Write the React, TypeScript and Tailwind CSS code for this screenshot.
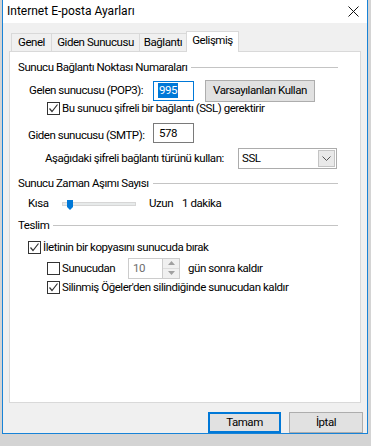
import React from 'react';

const Check = ({ checked }: { checked?: boolean }) => (
  <div className="w-[13px] h-[13px] border border-[#333333] bg-white flex items-center justify-center shrink-0">
    {checked && (
      <svg width="11" height="11" viewBox="0 0 11 11" fill="none">
        <path d="M1.5 5.5L4 8.5L9.5 1.5" stroke="#333333" strokeWidth="1.2" />
      </svg>
    )}
  </div>
);

const GroupHead = ({ title }: { title: string }) => (
  <div className="h-[16px] flex items-center pl-[8px] pr-[22px]">
    <span>{title}</span>
    <div className="flex-1 h-px bg-[#c4c4c4] ml-[4px]"></div>
  </div>
);

const tabs = [
  { label: 'Genel', w: 'w-[41px]' },
  { label: 'Giden Sunucusu', w: 'w-[89px]' },
  { label: 'Bağlantı', w: 'w-[48px]' },
];

export default function App() {
  return (
    <div
      className="w-[371px] h-[446px] bg-[#d4d4d4] overflow-hidden text-[11.5px] tracking-[-0.45px] text-black"
      style={{ fontFamily: 'Roboto, "Liberation Sans", sans-serif' }}
    >
      <div className="ml-[2px] w-[366px] h-[434px] border-x border-b border-[#1883d7] bg-[#f0f0f0] flex flex-col">
        {/* başlık çubuğu */}
        <div className="h-[23px] bg-white flex items-center justify-between pl-[4px] pr-[8px] text-[12px] tracking-normal">
          <span>Internet E-posta Ayarları</span>
          <svg width="11" height="11" viewBox="0 0 11 11">
            <path d="M0.5 0.5L10.5 10.5M10.5 0.5L0.5 10.5" stroke="#111111" strokeWidth="1" />
          </svg>
        </div>

        {/* sekmeler */}
        <div className="mt-[7px] ml-[8px] h-[21px] flex items-end">
          {tabs.map((t) => (
            <div
              key={t.label}
              className={`${t.w} h-[18px] border border-b-0 border-[#d9d9d9] bg-[#f0f0f0] flex items-center justify-center -mr-px`}
            >
              {t.label}
            </div>
          ))}
          <div className="w-[53px] h-[21px] border border-b-0 border-[#d9d9d9] bg-white flex items-center justify-center pb-[2px] -mb-px relative z-10">
            Gelişmiş
          </div>
        </div>

        {/* sekme paneli */}
        <div className="ml-[6px] w-[352px] h-[353px] border border-[#d9d9d9] bg-white flex flex-col pt-[8px]">
          <GroupHead title="Sunucu Bağlantı Noktası Numaraları" />

          <div className="mt-[4px] h-[22px] flex items-center pl-[19px]">
            <span className="w-[124px]">Gelen sunucusu (POP3):</span>
            <div className="w-[41px] h-[20px] border border-[#0078d7] bg-white flex items-center pl-[4px]">
              <span className="bg-[#0078d7] text-white px-px leading-[15px]">995</span>
            </div>
            <button className="ml-[11px] w-[110px] h-[22px] border border-[#adadad] bg-[#e1e1e1]">
              Varsayılanları Kullan
            </button>
          </div>

          <div className="h-[13px] flex items-center pl-[37px]">
            <Check checked />
            <span className="ml-[2px]">Bu sunucu şifreli bir bağlantı (SSL) gerektirir</span>
          </div>

          <div className="mt-[8px] h-[21px] flex items-center pl-[18px]">
            <span className="w-[125px] pt-[4px]">Giden sunucusu (SMTP):</span>
            <div className="w-[41px] h-[20px] border border-[#7a7a7a] bg-white flex items-center pl-[5px]">578</div>
          </div>

          <div className="mt-[4px] h-[21px] flex items-center pl-[35px]">
            <span className="w-[193px]">Aşağıdaki şifreli bağlantı türünü kullan:</span>
            <div className="w-[99px] h-[21px] border border-[#acacac] bg-white flex items-center justify-between pl-[3px] pr-px">
              <span>SSL</span>
              <div className="w-[17px] h-[17px] border border-[#c4c4c4] bg-[#e9e9e9] flex items-center justify-center">
                <svg width="9" height="5" viewBox="0 0 9 5" fill="none">
                  <path d="M0.5 0.5L4.5 4.5L8.5 0.5" stroke="#555555" strokeWidth="1" />
                </svg>
              </div>
            </div>
          </div>

          <div className="mt-[7px]">
            <GroupHead title="Sunucu Zaman Aşımı Sayısı" />
          </div>

          <div className="mt-[4px] h-[16px] flex items-center pl-[18px]">
            <span className="w-[34px]">Kısa</span>
            <div className="relative w-[74px] h-[4px] border border-[#d6d6d6] bg-[#e7eaea]">
              <svg className="absolute left-[4px] -top-[3px]" width="6" height="10" viewBox="0 0 6 10">
                <path d="M0 0H6V7L3 10L0 7Z" fill="#0078d7" />
              </svg>
            </div>
            <span className="ml-[13px]">Uzun</span>
            <span className="ml-[9px]">1 dakika</span>
          </div>

          <div className="mt-[6px]">
            <GroupHead title="Teslim" />
          </div>

          <div className="mt-[7px] h-[14px] flex items-center pl-[18px]">
            <Check checked />
            <span className="ml-[2px]">İletinin bir kopyasını sunucuda bırak</span>
          </div>

          <div className="mt-[3px] h-[21px] flex items-center pl-[37px]">
            <Check />
            <span className="ml-[2px] w-[66px]">Sunucudan</span>
            <div className="w-[52px] h-[21px] border border-[#cccccc] bg-white flex items-center justify-between">
              <span className="pl-[4px] text-[#6d6d6d]">10</span>
              <div className="w-[17px] h-full border-l border-[#cccccc] bg-[#f0f0f0] flex flex-col">
                <div className="flex-1 flex items-center justify-center border-b border-[#dcdcdc]">
                  <svg width="7" height="4" viewBox="0 0 7 4">
                    <path d="M0 4L3.5 0L7 4Z" fill="#a0a0a0" />
                  </svg>
                </div>
                <div className="flex-1 flex items-center justify-center">
                  <svg width="7" height="4" viewBox="0 0 7 4">
                    <path d="M0 0L3.5 4L7 0Z" fill="#a0a0a0" />
                  </svg>
                </div>
              </div>
            </div>
            <span className="ml-[8px]">gün sonra kaldır</span>
          </div>

          <div className="mt-[2px] h-[13px] flex items-center pl-[37px]">
            <Check checked />
            <span className="ml-[2px]">Silinmiş Öğeler'den silindiğinde sunucudan kaldır</span>
          </div>
        </div>

        {/* alt düğmeler */}
        <div className="mt-[9px] flex justify-end gap-[8px] pr-[4px]">
          <button className="w-[73px] h-[21px] border-2 border-[#0078d7] bg-[#e1e1e1]">Tamam</button>
          <button className="w-[74px] h-[21px] border border-[#adadad] bg-[#e1e1e1]">İptal</button>
        </div>
      </div>
    </div>
  );
}
